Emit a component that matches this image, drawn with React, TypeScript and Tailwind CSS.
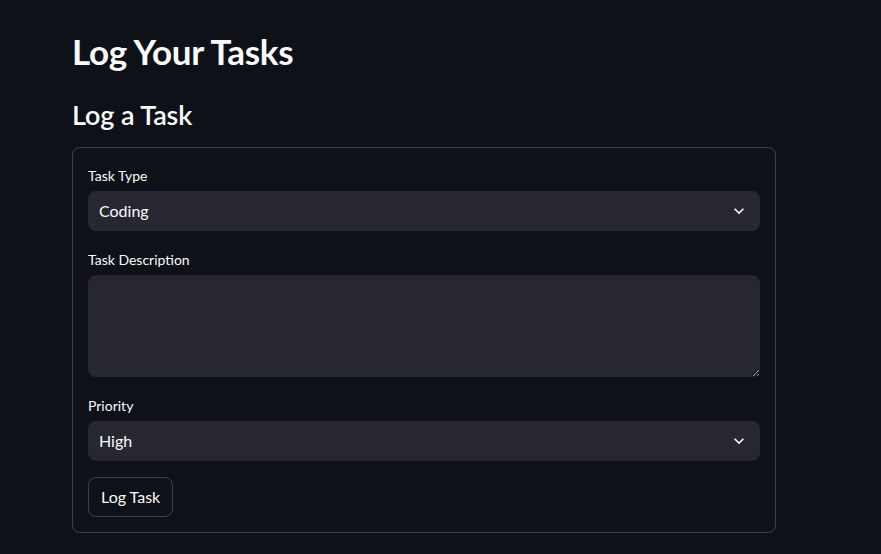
import type { ReactNode } from 'react';

function Chevron() {
  return (
    <svg width="20" height="20" viewBox="0 0 24 24" fill="#fafafa" className="shrink-0">
      <path d="M7.41 8.59 12 13.17l4.59-4.58L18 10l-6 6-6-6 1.41-1.41z" />
    </svg>
  );
}

function Field({ label, children }: { label: string; children: ReactNode }) {
  return (
    <div className="flex flex-col">
      <label className="min-h-6 mb-1 flex items-center text-[14px] text-[#fafafa]">{label}</label>
      {children}
    </div>
  );
}

function Select({ value }: { value: string }) {
  return (
    <div className="h-10 rounded-lg bg-[#262730] flex items-center justify-between pl-[11px] pr-[11px] text-[16px] text-[#fafafa]">
      <span>{value}</span>
      <Chevron />
    </div>
  );
}

export default function App() {
  return (
    <div
      className="min-h-[554px] bg-[#0e1117] text-[#fafafa]"
      style={{ fontFamily: 'Lato, "Noto Sans", sans-serif' }}
    >
      <div className="ml-[72px] w-[704px] pt-[28px]">
        <h1 className="text-[35px] font-bold leading-[46px] tracking-[-0.3px]">Log Your Tasks</h1>
        <h2 className="mt-[23px] text-[27px] font-semibold leading-[36px] tracking-[-0.1px]">Log a Task</h2>
        <form className="mt-[14px] border border-[#3e4046] rounded-lg p-[15px] flex flex-col gap-4">
          <Field label="Task Type">
            <Select value="Coding" />
          </Field>
          <Field label="Task Description">
            <textarea className="h-[102px] rounded-lg bg-[#262730] px-3 py-2 text-[16px] text-[#fafafa] outline-none resize-y [color-scheme:dark]" />
          </Field>
          <Field label="Priority">
            <Select value="High" />
          </Field>
          <div>
            <button
              type="button"
              className="h-10 px-3 rounded-lg border border-[#3e4046] text-[16px] text-[#fafafa] bg-transparent"
            >
              Log Task
            </button>
          </div>
        </form>
      </div>
    </div>
  );
}
